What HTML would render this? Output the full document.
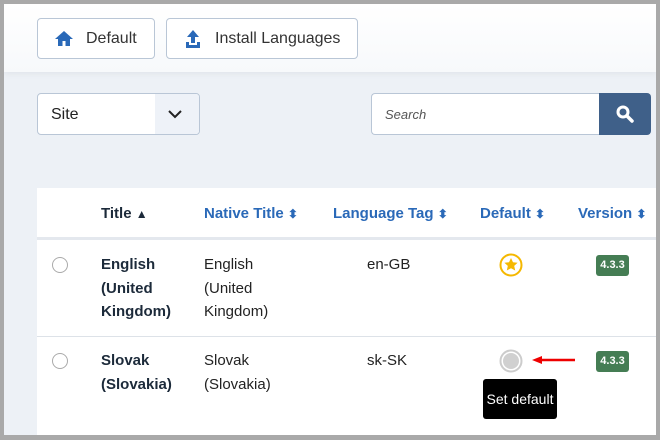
<!DOCTYPE html>
<html><head><style>
*{box-sizing:border-box;margin:0;padding:0}
body{width:660px;height:440px;background:#a9a9a9;position:relative;overflow:hidden;font-family:"Liberation Sans",sans-serif;}
#f{position:absolute;left:4px;top:4px;width:652px;height:431px;background:#edf1f6;overflow:hidden}
.top{position:absolute;left:0;top:0;width:652px;height:68px;background:linear-gradient(#fff,#f7f9fb);box-shadow:0 2px 6px rgba(0,0,0,.05)}
.btn{position:absolute;top:14px;height:41px;border:1px solid #b9c6d6;border-radius:4px;background:#fff;font-size:16px;color:#333;display:flex;align-items:center}
.a{position:absolute}
.hd{position:absolute;top:201px;font-size:15px;font-weight:bold;color:#2a69b8}
.t{position:absolute;font-size:15px;line-height:23.5px;color:#222}
.b{font-weight:bold;color:#1c2a3a}
.rad{position:absolute;width:16px;height:16px;border:1px solid #aaa;border-radius:50%;background:#fff}
.ver{position:absolute;width:33px;height:21px;background:#457d54;color:#fff;font-size:11px;font-weight:bold;border-radius:3px;text-align:center;line-height:21px}
.ar{font-size:12px}
</style></head><body><div id="f">
<div class="top"></div>
<div class="btn" style="left:33px;width:118px"><svg class="a" style="left:16px;top:11px" width="20" height="17" viewBox="0 0 20 17"><path d="M10 1L1 9h3v7h4.5v-5h3v5H16V9h3z" fill="#2a69b8"/></svg><span style="margin-left:48px">Default</span></div>
<div class="btn" style="left:162px;width:192px"><svg class="a" style="left:18px;top:10px" width="16" height="20" viewBox="0 0 16 20"><path d="M8 1L2 8h4v6h4V8h4z M1 13v6h14v-6h-3v3H4v-3z" fill="#2a69b8"/></svg><span style="margin-left:48px">Install Languages</span></div>
<div class="a" style="left:33px;top:89px;width:163px;height:42px;border:1px solid #b9c6d6;border-radius:4px;background:#fff;overflow:hidden">
<span class="a" style="left:13px;top:12px;font-size:16px;color:#222">Site</span>
<div class="a" style="left:117px;top:0;width:46px;height:42px;background:#eef2f8"></div>
<svg class="a" style="left:129px;top:14px" width="16" height="12"><path d="M2 3l6 6 6-6" stroke="#222" stroke-width="2" fill="none"/></svg></div>
<div class="a" style="left:367px;top:89px;width:229px;height:42px;border:1px solid #b9c6d6;border-right:none;border-radius:4px 0 0 4px;background:#fff"><span class="a" style="left:13px;top:13px;font-size:13px;font-style:italic;color:#555">Search</span></div>
<div class="a" style="left:595px;top:89px;width:52px;height:42px;background:#3f6089;border-radius:0 4px 4px 0"><svg class="a" style="left:17px;top:12px" width="18" height="18"><circle cx="7" cy="7" r="5" stroke="#fff" stroke-width="3" fill="none"/><path d="M11 11l5 5" stroke="#fff" stroke-width="3.5" stroke-linecap="round"/></svg></div>
<div class="a" style="left:33px;top:184px;width:619px;height:260px;background:#fff"></div>
<div class="a" style="left:33px;top:233px;width:619px;height:3px;background:#e4e8ee"></div>
<div class="a" style="left:33px;top:332px;width:619px;height:1px;background:#dde2e8"></div>
<div class="hd" style="left:97px;color:#1c2a3a">Title <span class="ar">▲</span></div>
<div class="hd" style="left:200px">Native Title <span class="ar">⬍</span></div>
<div class="hd" style="left:329px">Language Tag <span class="ar">⬍</span></div>
<div class="hd" style="left:476px">Default <span class="ar">⬍</span></div>
<div class="hd" style="left:574px">Version <span class="ar">⬍</span></div>
<div class="rad" style="left:48px;top:253px"></div>
<div class="t b" style="left:97px;top:249px">English<br>(United<br>Kingdom)</div>
<div class="t" style="left:200px;top:249px">English<br>(United<br>Kingdom)</div>
<div class="t" style="left:363px;top:249px">en-GB</div>
<svg class="a" style="left:495px;top:249px" width="24" height="24"><circle cx="12" cy="12" r="10.5" fill="#fff" stroke="#f5b800" stroke-width="2"/><path d="M12 5l2 4.3 4.6.5-3.4 3.1 1 4.6L12 15.2 7.8 17.5l1-4.6L5.4 9.8 10 9.3z" fill="#f5b800"/></svg>
<div class="ver" style="left:592px;top:251px">4.3.3</div>
<div class="rad" style="left:48px;top:349px"></div>
<div class="t b" style="left:97px;top:345px">Slovak<br>(Slovakia)</div>
<div class="t" style="left:200px;top:345px">Slovak<br>(Slovakia)</div>
<div class="t" style="left:363px;top:345px">sk-SK</div>
<svg class="a" style="left:495px;top:345px" width="24" height="24"><circle cx="12" cy="12" r="10.5" fill="#fff" stroke="#ccc" stroke-width="2"/><circle cx="12" cy="12" r="8" fill="#d0d0d0"/></svg>
<svg class="a" style="left:526px;top:350px" width="48" height="12"><path d="M8 6h37" stroke="#e00" stroke-width="2.5"/><path d="M2 6l10-4v8z" fill="#e00"/></svg>
<div class="ver" style="left:592px;top:347px">4.3.3</div>
<div class="a" style="left:479px;top:375px;width:74px;height:40px;background:#000;border-radius:3px;color:#fff;font-size:14px;text-align:center;line-height:40px">Set default</div>
</div></body></html>
